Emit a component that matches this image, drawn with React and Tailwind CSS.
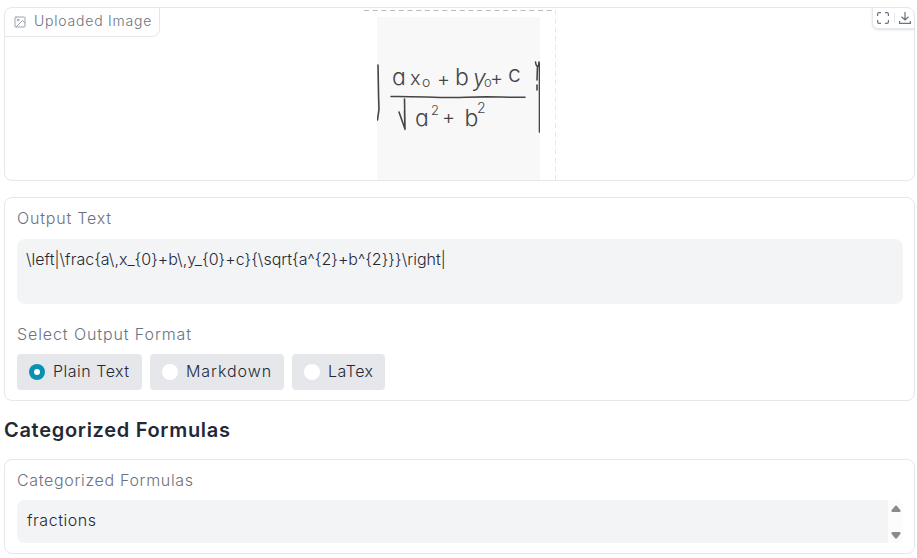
import React from "react";

function ImageIcon() {
  return (
    <svg width="12" height="12" viewBox="0 0 24 24" fill="none" stroke="currentColor" strokeWidth="2" strokeLinecap="round" strokeLinejoin="round">
      <rect x="2" y="2" width="20" height="20" rx="2" />
      <circle cx="8" cy="8" r="1.8" />
      <path d="M22 14l-5-5L4 22" />
    </svg>
  );
}

function Formula() {
  return (
    <svg className="block h-[163px] w-[163px] bg-[#f8f8f8]" viewBox="377 17 163 163" fill="none" stroke="#454545" strokeWidth="1.6" strokeLinecap="round">
      <path d="M378 65L378.6 97L379 109L377.5 120" />
      <path d="M391 96.500C420 96 440 98.500 466 97.300S500 97.500 525 97.300" />
      <path d="M399 112L405 129L404.500 99M404.500 111L405 129.500" />
      <path d="M535.500 62Q536 67 538.500 66L539 62M537.500 66L537 80M537 85V90M539.500 63V132" />
      <g className="font-['Inter'] [font-feature-settings:'cv11']" fill="#454545" stroke="none" fontWeight="350">
        <text x="392" y="85" fontSize="23">a</text>
        <text x="410" y="85" fontSize="20">x</text>
        <text x="422" y="87" fontSize="14">o</text>
        <text x="437" y="86" fontSize="20">+</text>
        <text x="455" y="85" fontSize="23">b</text>
        <text x="473" y="86" fontSize="23" fontStyle="italic">y</text>
        <text x="484" y="87" fontSize="13">o</text>
        <text x="490" y="85" fontSize="20">+</text>
        <text x="508" y="82" fontSize="23">c</text>
        <text x="415" y="125.500" fontSize="23">a</text>
        <text x="431" y="115" fontSize="13">2</text>
        <text x="442" y="124" fontSize="20">+</text>
        <text x="464.500" y="126" fontSize="23">b</text>
        <text x="477" y="113" fontSize="14">2</text>
      </g>
    </svg>
  );
}

function Radio({ label, checked, width, tracking }) {
  return (
    <label className={`flex h-9 items-center gap-2 rounded bg-[#e5e7eb] pl-3 ${width}`}>
      <span className={`flex size-4 shrink-0 items-center justify-center rounded-full ${checked ? "bg-[#0891b2]" : "bg-white"}`}>
        {checked && <span className="size-1.5 rounded-full bg-white" />}
      </span>
      <span className={`whitespace-nowrap pb-0.5 ${tracking}`}>{label}</span>
    </label>
  );
}

export default function App() {
  return (
    <main className="h-[558px] w-[917px] overflow-hidden bg-white pl-1 pt-[7px] font-['Inter',sans-serif] text-base font-light leading-6 text-[#1f2937]">
      <section className="relative flex h-[174px] w-[911px] overflow-hidden rounded-lg border border-[#e5e7eb] pl-[372px]">
        <div className="mt-[9px]"><Formula /></div>
        <svg className="absolute left-[358px] top-0 h-[172px] w-[194px]" fill="none">
          <path d="M1 2.500H192" stroke="#b9b9b9" strokeDasharray="5 3.700" />
          <path d="M192.500 2V172" stroke="#e5e7eb" strokeDasharray="5 3.700" />
        </svg>
        <div className="absolute -left-px -top-px flex h-[30px] w-[156px] items-center gap-2 rounded-br-lg rounded-tl-lg border border-[#e5e7eb] bg-white pl-[9px] text-sm text-[#6b7280]">
          <span className="text-[#9ca3af]"><ImageIcon /></span>
          <span className="whitespace-nowrap pb-0.5 tracking-[0.78px]">Uploaded Image</span>
        </div>
        <div className="absolute -right-px -top-px flex h-[22px] w-[43px] items-center gap-[5px] rounded-bl-md rounded-tr-lg border border-[#e5e7eb] bg-white pl-1 text-[#6b7280] shadow-sm">
          <svg width="12" height="12" viewBox="0 0 12 12" fill="none" stroke="currentColor" strokeWidth="1.200">
            <path d="M.6 4V2Q.6.6 2 .6H4M8 .6H10Q11.400.6 11.400 2V4M11.400 8V10Q11.400 11.400 10 11.400H8M4 11.400H2Q.6 11.400.6 10V8" />
          </svg>
          <span className="-mr-px h-[10px] w-px bg-[#e5e7eb]" />
          <svg width="12" height="12" viewBox="0 0 12 12" fill="none" stroke="currentColor" strokeWidth="1.200">
            <path d="M6 0V8M2.500 4.700L6 8L9.500 4.700M.6 9V11.400H11.400V9" />
          </svg>
        </div>
      </section>

      <section className="mt-4 h-[204px] w-[911px] rounded-lg border border-[#e5e7eb] px-3 pt-2">
        <h3 className="tracking-[0.8px] text-[#6b7280]">Output Text</h3>
        <div className="mt-[9px] h-[65px] w-[886px] rounded-lg bg-[#f3f4f6] px-[9px] pt-2 tracking-[0.01px]">
          {"\\left|\\frac{a\\,x_{0}+b\\,y_{0}+c}{\\sqrt{a^{2}+b^{2}}}\\right|"}
        </div>
        <h3 className="mt-[18px] tracking-[0.9px] text-[#6b7280]">Select Output Format</h3>
        <div className="mt-2 flex gap-2">
          <Radio label="Plain Text" checked width="w-[125px]" tracking="tracking-[0.5px]" />
          <Radio label="Markdown" width="w-[134px]" tracking="tracking-[0.95px]" />
          <Radio label="LaTex" width="w-[93px]" tracking="tracking-[0.5px]" />
        </div>
      </section>

      <h2 className="mt-[15px] h-7 text-xl font-semibold leading-7 tracking-[0.7px]">Categorized Formulas</h2>

      <section className="mt-[15px] h-[95px] w-[911px] rounded-lg border border-[#e5e7eb] px-3 pt-2">
        <h3 className="tracking-[0.67px] text-[#6b7280]">Categorized Formulas</h3>
        <div className="mt-2 flex h-[43px] w-[886px] overflow-hidden rounded-lg bg-[#f3f4f6]">
          <div className="flex-1 pl-2.5 pt-2 tracking-[0.55px]">fractions</div>
          <div className="flex w-[15px] flex-col items-center justify-between bg-[#fcfcfc] pb-1 pt-[5px] text-[#8b8b8b]">
            <svg width="10" height="7" viewBox="0 0 10 8" preserveAspectRatio="none"><path d="M4 1Q5 0 6 1L9.500 6Q10 8 8.500 8H1.500Q0 8 .5 6Z" fill="currentColor" /></svg>
            <svg width="10" height="7" viewBox="0 0 10 8" preserveAspectRatio="none"><path d="M4 7Q5 8 6 7L9.500 2Q10 0 8.500 0H1.500Q0 0 .5 2Z" fill="currentColor" /></svg>
          </div>
        </div>
      </section>
    </main>
  );
}
